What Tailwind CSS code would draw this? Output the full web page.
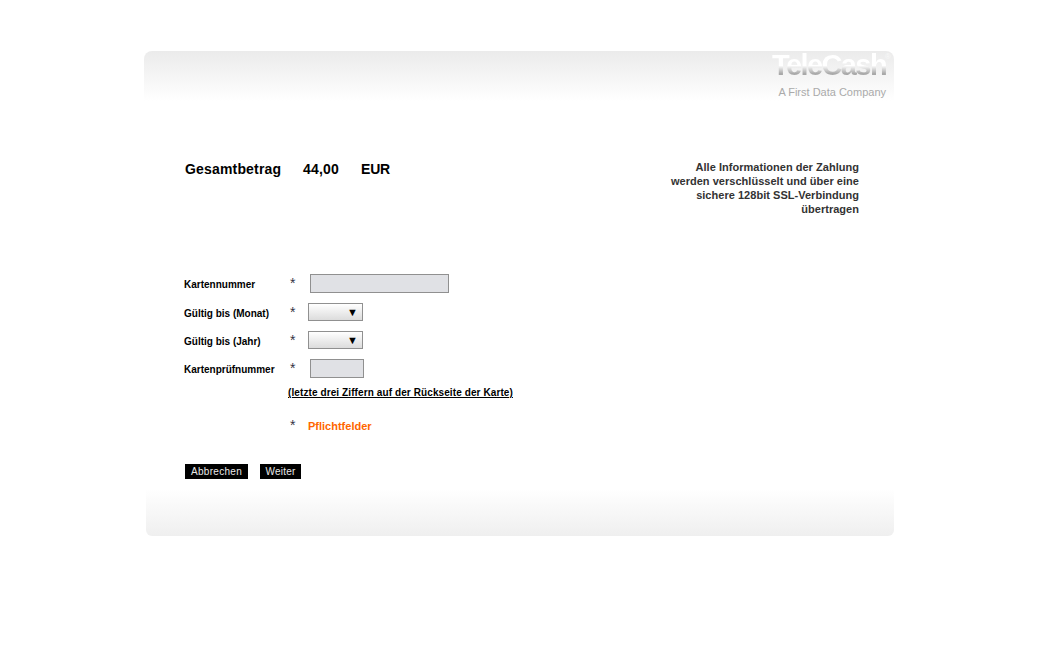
<!DOCTYPE html>
<html lang="de">
<head>
    <meta charset="UTF-8">
    <meta name="viewport" content="width=device-width, initial-scale=1.0">
    <title>Zahlung - Kartendaten</title>
    <script src="https://cdn.jsdelivr.net/npm/@tailwindcss/browser@4"></script>
</head>
<body class="bg-white font-['Liberation_Sans',Arial,sans-serif] text-black">

    <div class="w-[750px] ml-[144px] pt-[51px]">

        <!-- Kopf mit Logo -->
        <header class="relative h-[50px] rounded-t-[8px] bg-gradient-to-b from-[#ebebeb] to-white flex justify-end pr-[8px]">
            <div class="flex flex-col items-end">
                <span class="mt-[-2px] h-[33px] text-[29px] leading-[33px] font-bold tracking-[-1.6px] text-transparent bg-clip-text bg-gradient-to-b from-white from-50% to-[#a8a8a8] to-75%">TeleCash</span>
                <span class="mt-[3px] text-[11px] leading-[14px] text-[#aaaaaa]">A First Data Company</span>
            </div>
            <span class="absolute right-[3px] top-[1px] text-[8px] leading-[10px] text-[#f8f8f8]">®</span>
        </header>

        <!-- Betrag und Hinweis -->
        <section class="mt-[59px] pl-[41px] pr-[35px] h-[114px] flex justify-between">
            <div class="flex text-[14px] leading-[18px] font-bold">
                <span class="w-[118px] tracking-[0.17px]">Gesamtbetrag</span>
                <span class="w-[58px] tracking-[0.2px]">44,00</span>
                <span class="tracking-[-0.2px]">EUR</span>
            </div>
            <p class="w-[200px] text-right text-[11px] leading-[14px] font-bold text-[#333333] tracking-[0.03px]">
                Alle Informationen der Zahlung<br>werden verschlüsselt und über eine<br>sichere 128bit SSL-Verbindung<br>übertragen
            </p>
        </section>

        <!-- Kartendaten -->
        <form class="pl-[40px]">
            <div class="flex h-[29px] items-start">
                <label class="w-[106px] pt-[4px] text-[10px] leading-[13px] font-bold">Kartennummer</label>
                <span class="w-[20px] pt-[1px] text-[14px] leading-[16px] text-[#333344]">*</span>
                <input type="text" class="w-[139px] h-[19px] bg-[#e0e1e5] border border-[#909090]">
            </div>
            <div class="flex h-[28px] items-start">
                <label class="w-[106px] pt-[4px] text-[10px] leading-[13px] font-bold">Gültig bis (Monat)</label>
                <span class="w-[18px] pt-[1px] text-[14px] leading-[16px] text-[#333344]">*</span>
                <div class="relative w-[55px] h-[18px]">
                    <select class="appearance-none w-full h-full border border-[#909090] bg-gradient-to-b from-white to-[#dcdcdc]"></select>
                    <span class="absolute right-[5px] top-[2px] text-[11px] leading-[14px] text-black">▼</span>
                </div>
            </div>
            <div class="flex h-[28px] items-start">
                <label class="w-[106px] pt-[4px] text-[10px] leading-[13px] font-bold">Gültig bis (Jahr)</label>
                <span class="w-[18px] pt-[1px] text-[14px] leading-[16px] text-[#333344]">*</span>
                <div class="relative w-[55px] h-[18px]">
                    <select class="appearance-none w-full h-full border border-[#909090] bg-gradient-to-b from-white to-[#dcdcdc]"></select>
                    <span class="absolute right-[5px] top-[2px] text-[11px] leading-[14px] text-black">▼</span>
                </div>
            </div>
            <div class="flex h-[19px] items-start">
                <label class="w-[106px] pt-[4px] text-[10px] leading-[13px] font-bold">Kartenprüfnummer</label>
                <span class="w-[20px] pt-[1px] text-[14px] leading-[16px] text-[#333344]">*</span>
                <input type="text" class="w-[54px] h-[19px] bg-[#e0e1e5] border border-[#909090]">
            </div>
            <a href="#" class="block mt-[8px] ml-[104px] text-[10px] leading-[13px] font-bold underline tracking-[0.1px]">(letzte drei Ziffern auf der Rückseite der Karte)</a>
            <div class="flex items-start mt-[18px] ml-[106px] h-[16px]">
                <span class="w-[18px] text-[14px] leading-[16px] text-[#333344]">*</span>
                <span class="text-[11px] leading-[18px] font-bold text-[#ff6600]">Pflichtfelder</span>
            </div>
            <div class="flex gap-[12px] mt-[31px] ml-[1px]">
                <button type="button" class="w-[63px] h-[15px] bg-black text-[#e8e8e8] text-[10px] leading-[15px] tracking-[0.3px]">Abbrechen</button>
                <button type="button" class="w-[41px] h-[15px] bg-black text-[#e8e8e8] text-[10px] leading-[15px] tracking-[0.2px]">Weiter</button>
            </div>
        </form>

        <!-- Fuss -->
        <footer class="mt-[10px] ml-[2px] h-[47px] rounded-b-[6px] bg-gradient-to-b from-white to-[#efefef]"></footer>
    </div>

</body>
</html>
